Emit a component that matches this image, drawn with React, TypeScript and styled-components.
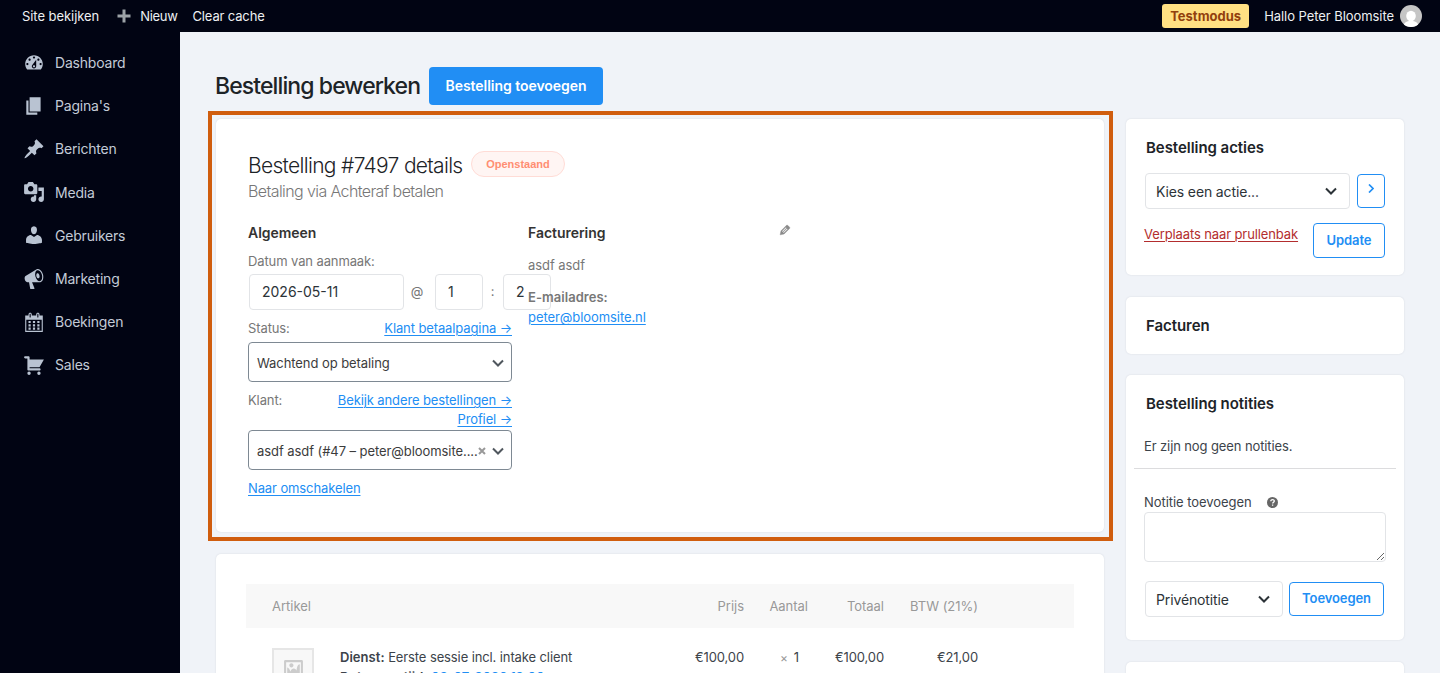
import React from "react";
import styled, { createGlobalStyle, css } from "styled-components";

const GlobalStyle = createGlobalStyle`
  * { box-sizing: border-box; }
  html, body { margin: 0; padding: 0; overflow: hidden; }
  body {
    font-family: Inter, "Liberation Sans", sans-serif;
    font-size: 13px;
    letter-spacing: -0.11px;
    color: #3c434a;
    background: #f0f3f8;
  }
  h1, h2, h3, p { margin: 0; }
`;

const Screen = styled.div`
  height: 673px;
  overflow: hidden;
  display: flex;
  flex-direction: column;
`;

const AdminBar = styled.header`
  flex: none;
  height: 32px;
  padding: 0 18px 0 22px;
  display: flex;
  align-items: center;
  background: #010413;
  color: #eef0f2;
  line-height: 32px;
  font-size: 13px;
`;

const BarItem = styled.span<{ $gap: number; $spacing?: number }>`
  display: flex;
  align-items: center;
  margin-left: ${(p) => p.$gap}px;
  letter-spacing: ${(p) => p.$spacing ?? -0.06}px;
  white-space: nowrap;
`;

const PlusIcon = styled.svg`
  width: 14px;
  height: 14px;
  margin-right: 9px;
  fill: #9ca2a7;
`;

const TestBadge = styled.span`
  margin-left: auto;
  height: 24px;
  width: 87px;
  text-align: center;
  border-radius: 3px;
  background: #ffe083;
  color: #92400e;
  font-weight: 700;
  letter-spacing: 0;
  line-height: 25px;
`;

const Avatar = styled.svg`
  width: 22px;
  height: 22px;
  margin-left: 6px;
  border-radius: 50%;
  background: #c5c5c5;
`;

const Body = styled.div`
  flex: 1;
  min-height: 0;
  display: flex;
`;

const Sidebar = styled.nav`
  flex: none;
  width: 180px;
  padding-top: 9px;
  background: #010413;
`;

const MenuItem = styled.a`
  display: flex;
  align-items: center;
  height: 43.2px;
  padding-left: 23px;
  gap: 10px;
  font-size: 14px;
  letter-spacing: -0.2px;
  color: #c3cbd7;
`;

const MenuIcon = styled.svg`
  width: 22px;
  height: 22px;
  fill: #b9c3d2;
`;

const Main = styled.main`
  flex: 1;
  min-width: 0;
  padding: 35px 36px 0 35px;
`;

const TitleRow = styled.div`
  display: flex;
  align-items: center;
  height: 38px;
  margin-bottom: 6px;
  gap: 9px;
`;

const PageTitle = styled.h1`
  width: 205px;
  font-size: 23px;
  font-weight: 500;
  letter-spacing: -0.9px;
  line-height: 38px;
  color: #1d2327;
  white-space: nowrap;
`;

const PrimaryButton = styled.button`
  width: 174px;
  height: 38px;
  padding: 0;
  border: 0;
  border-radius: 4px;
  background: #218ef4;
  color: #fff;
  font: 600 14px/38px Inter, sans-serif;
  letter-spacing: -0.04px;
`;

const Columns = styled.div`
  display: flex;
  align-items: flex-start;
  margin-left: -7px;
`;

const ContentColumn = styled.div`
  flex: none;
  width: 905px;
`;

const SideColumn = styled.aside`
  width: 278px;
  margin: 8px 0 0 13px;
  display: flex;
  flex-direction: column;
`;

const panel = css`
  background: #fff;
  border-radius: 5px;
  box-shadow: 0 0 2px rgba(30, 40, 60, 0.12);
`;

const Highlight = styled.div`
  height: 430px;
  padding: 4px 5px 5px 4px;
  border: 4px solid #d05d0e;
`;

const OrderPanel = styled.section`
  ${panel}
  height: 413px;
  padding: 32px;
`;

const OrderHeading = styled.div`
  display: flex;
  align-items: flex-start;
`;

const OrderTitle = styled.h2`
  width: 223px;
  font-size: 21px;
  font-weight: 300;
  line-height: 30px;
  letter-spacing: -0.68px;
  color: #1d2327;
  white-space: nowrap;
`;

const StatusPill = styled.span`
  width: 94px;
  height: 26px;
  border: 1px solid #ffdcd6;
  border-radius: 13px;
  background: #fff5f3;
  color: #ff8e72;
  font-family: "Liberation Sans", Arial, sans-serif;
  font-size: 11px;
  font-weight: 700;
  letter-spacing: 0;
  line-height: 24px;
  text-align: center;
`;

const OrderSubtitle = styled.p`
  font-size: 16px;
  font-weight: 300;
  line-height: 21px;
  letter-spacing: -0.6px;
  color: #777;
`;

const OrderColumns = styled.div`
  display: flex;
  gap: 16px;
  margin-top: 21px;
  color: #777;
`;

const OrderColumn = styled.div`
  width: 264px;
`;

const ColumnTitle = styled.h3`
  display: flex;
  justify-content: space-between;
  font-size: 14px;
  font-weight: 600;
  line-height: 20px;
  letter-spacing: -0.04px;
  color: #333;
`;

const EditIcon = styled.svg`
  width: 14px;
  height: 14px;
  fill: #8a8a8a;
  stroke: #8a8a8a;
  stroke-width: 0.6;
`;

const FieldLabel = styled.div<{ $top: number }>`
  display: flex;
  justify-content: space-between;
  margin-top: ${(p) => p.$top}px;
  line-height: 19px;
`;

const FieldLinks = styled.span`
  display: flex;
  flex-direction: column;
  align-items: flex-end;
`;

const Link = styled.a<{ $danger?: boolean }>`
  color: ${(p) => (p.$danger ? "#b32d2e" : "#218ef4")};
  text-decoration: underline;
  text-decoration-thickness: 1px;
  text-underline-offset: 1.5px;
  white-space: nowrap;
`;

const DateRow = styled.div`
  display: flex;
  align-items: center;
  width: max-content;
  height: 36px;
  margin: 3px 0 9px 1px;
`;

const TextBox = styled.span<{ $width: number }>`
  width: ${(p) => p.$width}px;
  height: 36px;
  padding: 0 0 0 12px;
  border: 1px solid #e2e4e7;
  border-radius: 4px;
  background: #fff;
  color: #2c3338;
  font-size: 14px;
  letter-spacing: 0;
  line-height: 34px;
`;

const Separator = styled.span`
  width: 31px;
  text-align: center;
  padding: 0 5px 2px 0;
`;

const ColonSeparator = styled(Separator)`
  width: 20px;
  padding-right: 1px;
`;

const SelectBox = styled.div<{ $top: number }>`
  display: flex;
  align-items: center;
  height: 40px;
  margin-top: ${(p) => p.$top}px;
  padding: 2px 7px 0 8px;
  border: 1px solid #7e8993;
  border-radius: 4px;
  background: #fff;
  color: #3c3c3c;
  letter-spacing: -0.07px;
  white-space: nowrap;
`;

const ClearMark = styled.svg`
  width: 8px;
  height: 8px;
  margin-right: 6px;
  stroke: #999;
  stroke-width: 2;
`;

const Chevron = styled.svg<{ $color?: string }>`
  width: 12px;
  height: 8px;
  fill: none;
  stroke: ${(p) => p.$color ?? "#50575e"};
  stroke-width: 2;
`;

const Grow = styled.span`
  flex: 1;
  min-width: 0;
`;

const SwitchLink = styled.div`
  margin-top: 9px;
  line-height: 19px;
`;

const BillingText = styled.p<{ $top: number }>`
  margin-top: ${(p) => p.$top}px;
  line-height: 20px;
  letter-spacing: -0.07px;
`;

const Strong = styled.strong<{ $block?: boolean }>`
  display: ${(p) => (p.$block ? "block" : "inline")};
  font-weight: 600;
  letter-spacing: 0.04px;
`;

const ItemsPanel = styled.section`
  ${panel}
  margin: 13px 9px 0 8px;
  height: 140px;
  padding: 30px 30px 0 30px;
`;

const ItemsHead = styled.div`
  display: flex;
  height: 44px;
  align-items: center;
  padding: 0 0 0 26px;
  background: #f8f8f8;
  color: #999;
  letter-spacing: -0.02px;
`;

const ItemRow = styled.div`
  display: flex;
  padding: 20px 0 0 26px;
  line-height: 19px;
  white-space: nowrap;
`;

const Cell = styled.span<{ $width: number }>`
  width: ${(p) => p.$width}px;
  text-align: right;
`;

const ItemName = styled.span<{ $width: number }>`
  width: ${(p) => p.$width}px;
`;

const ItemMeta = styled.span`
  display: block;
  line-height: 21px;
  letter-spacing: -0.15px;
`;

const Thumb = styled.span`
  width: 42px;
  height: 42px;
  margin-right: 26px;
  border: 2px solid #e6e6e6;
  background: #f8f8f8;
  display: flex;
  align-items: center;
  justify-content: center;
`;

const ThumbIcon = styled.svg`
  width: 21px;
  height: 21px;
  fill: #ccc;
`;

const Times = styled.small`
  margin-right: 6px;
  font-size: 12px;
  color: #999;
`;

const DateValue = styled.b`
  font-weight: 600;
  color: #218ef4;
`;

const SidePanel = styled.section<{ $height: number; $gap?: number }>`
  ${panel}
  height: ${(p) => p.$height}px;
  margin-bottom: ${(p) => p.$gap ?? 22}px;
  padding: 16px 18px 0;
`;

const SideTitle = styled.h2`
  padding: 0 2px;
  font-size: 15px;
  font-weight: 600;
  line-height: 25px;
  letter-spacing: -0.05px;
  color: #1d2327;
`;

const ActionRow = styled.div<{ $top: number }>`
  display: flex;
  align-items: center;
  margin: ${(p) => p.$top}px 0 0 1px;
`;

const SideSelect = styled.div<{ $width: number }>`
  display: flex;
  align-items: center;
  width: ${(p) => p.$width}px;
  height: 36px;
  padding: 0 12px 0 10px;
  border: 1px solid #e2e4e7;
  border-radius: 4px;
  color: #2c3338;
  font-size: 14px;
  letter-spacing: -0.13px;
`;

const OutlineButton = styled.button<{ $width: number; $height: number; $gap: number }>`
  width: ${(p) => p.$width}px;
  height: ${(p) => p.$height}px;
  margin-left: ${(p) => p.$gap}px;
  padding: 0 0 2px;
  border: 1px solid #218ef4;
  border-radius: 4px;
  background: #fff;
  color: #218ef4;
  font: 600 13px/30px Inter, sans-serif;
  letter-spacing: -0.1px;
`;

const ArrowIcon = styled.svg`
  display: inline-block;
  width: 6px;
  height: 9px;
  margin-bottom: 2px;
  fill: none;
  stroke: #218ef4;
  stroke-width: 1.7;
`;

const TrashRow = styled.div`
  display: flex;
  justify-content: space-between;
  margin-top: 14px;
  padding-right: 1px;
  line-height: 23px;
`;

const EmptyNotes = styled.p`
  margin: 21px -10px 0;
  padding: 0 10px 12px;
  border-bottom: 1px solid #dcdcde;
  line-height: 19px;
`;

const NoteLabel = styled.div`
  display: flex;
  align-items: center;
  margin-top: 24px;
  line-height: 19px;
  letter-spacing: -0.05px;
`;

const HelpIcon = styled.svg`
  width: 11px;
  height: 11px;
  margin-left: 15px;
`;

const NoteArea = styled.textarea`
  display: block;
  width: 242px;
  height: 50px;
  border: 1px solid #e2e4e7;
  border-radius: 4px;
  background: #fff;
`;

const menu: { label: string; path: string }[] = [
  { label: "Dashboard", path: "M3.76 16h12.48c1.1-1.37 1.76-3.11 1.76-5 0-4.42-3.58-8-8-8s-8 3.58-8 8c0 1.89.66 3.63 1.76 5zM10 4c.55 0 1 .45 1 1s-.45 1-1 1-1-.45-1-1 .45-1 1-1zM6 6c.55 0 1 .45 1 1s-.45 1-1 1-1-.45-1-1 .45-1 1-1zm8 0c.55 0 1 .45 1 1s-.45 1-1 1-1-.45-1-1 .45-1 1-1zm-5.37 5.55L12 7v6c0 1.1-.9 2-2 2s-2-.9-2-2c0-.57.24-1.08.63-1.45zM4 10c.55 0 1 .45 1 1s-.45 1-1 1-1-.45-1-1 .45-1 1-1zm12 0c.55 0 1 .45 1 1s-.45 1-1 1-1-.45-1-1 .45-1 1-1zm-5 3c0-.55-.45-1-1-1s-1 .45-1 1 .45 1 1 1 1-.45 1-1z" },
  { label: "Pagina's", path: "M6 15V2h10v13H6zm-1 1h8v2H3V5h2v11z" },
  { label: "Berichten", path: "M10.44 3.02l1.82-1.82 6.36 6.35-1.83 1.82c-1.05-.68-2.48-.57-3.41.36l-.75.75c-.92.93-1.04 2.35-.35 3.41l-1.83 1.82-2.41-2.41-2.8 2.79c-.42.42-3.38 2.71-3.8 2.29s1.86-3.39 2.28-3.81l2.79-2.79L4.1 9.36l1.83-1.82c1.05.69 2.48.57 3.4-.36l.75-.75c.93-.92 1.05-2.35.36-3.41z" },
  { label: "Media", path: "M13 11V4c0-.55-.45-1-1-1h-1.67L9 1H5L3.67 3H2c-.55 0-1 .45-1 1v7c0 .55.45 1 1 1h10c.55 0 1-.45 1-1zM7 4.5c1.38 0 2.5 1.12 2.5 2.5S8.38 9.5 7 9.5 4.5 8.38 4.5 7 5.62 4.5 7 4.5zM14 6h5v10.5c0 1.38-1.12 2.5-2.5 2.5S14 17.88 14 16.5s1.12-2.5 2.5-2.5c.17 0 .34.02.5.05V9h-3V6zm-4 8.05V13h2v3.5c0 1.38-1.12 2.5-2.5 2.5S7 17.88 7 16.5 8.12 14 9.5 14c.17 0 .34.02.5.05z" },
  { label: "Gebruikers", path: "M10 9.25c-2.27 0-2.73-3.44-2.73-3.44C7 4.02 7.82 2 9.97 2c2.16 0 2.98 2.02 2.71 3.81 0 0-.41 3.44-2.68 3.44zm0 2.57L12.72 10c2.39 0 4.52 2.33 4.52 4.53v2.49s-3.65 1.13-7.24 1.13c-3.65 0-7.24-1.13-7.24-1.13v-2.49c0-2.25 1.94-4.48 4.47-4.48z" },
  { label: "Marketing", path: "M18.15 5.94c.46 1.62.38 3.22-.02 4.48-.42 1.28-1.26 2.18-2.3 2.48-.16.06-.26.06-.4.06-.06.02-.12.02-.18.02-.06.02-.14.02-.22.02h-6.8l2.22 5.5c.02.14-.06.26-.14.34-.08.1-.24.16-.34.16H6.95c-.1 0-.26-.06-.34-.16-.08-.08-.16-.2-.14-.34l-1-5.5H4.25l-.02-.02c-.5.06-1.08-.18-1.54-.62s-.88-1.08-1.06-1.88c-.24-.8-.2-1.56-.02-2.2.18-.62.58-1.08 1.06-1.3l.02-.02 9-5.4c.1-.06.18-.1.24-.16.06-.04.14-.08.24-.12.16-.08.28-.12.5-.18 1.04-.3 2.24.1 3.22.98s1.84 2.24 2.26 3.86zm-2.58 5.98h-.02c.4-.1.74-.34 1.04-.7.58-.7.86-1.76.86-3.04 0-.64-.1-1.3-.28-1.98-.34-1.36-1.02-2.5-1.78-3.24s-1.68-1.1-2.46-.88c-.82.22-1.4.96-1.7 2-.32 1.04-.28 2.36.06 3.72.38 1.36 1 2.5 1.8 3.24.78.74 1.62 1.1 2.48.88zm-2.54-7.08c.22-.04.42-.02.62.04.38.16.76.48 1.02 1s.42 1.2.42 1.78c0 .3-.04.56-.12.8-.18.48-.44.84-.86.94-.34.1-.8-.06-1.14-.4s-.64-.86-.78-1.5c-.18-.62-.12-1.24.02-1.72s.48-.84.82-.94z" },
  { label: "Boekingen", path: "M15 4h3v15H2V4h3V3c0-.41.15-.76.44-1.06.29-.29.65-.44 1.06-.44s.77.15 1.06.44c.29.3.44.65.44 1.06v1h4V3c0-.41.15-.76.44-1.06.29-.29.65-.44 1.06-.44s.77.15 1.06.44c.29.3.44.65.44 1.06v1zM6 3v2.5c0 .14.05.26.15.36.09.09.21.14.35.14s.26-.05.35-.14c.1-.1.15-.22.15-.36V3c0-.14-.05-.26-.15-.35-.09-.1-.21-.15-.35-.15s-.26.05-.35.15c-.1.09-.15.21-.15.35zm7 0v2.5c0 .14.05.26.14.36.1.09.22.14.36.14s.26-.05.36-.14c.09-.1.14-.22.14-.36V3c0-.14-.05-.26-.14-.35-.1-.1-.22-.15-.36-.15s-.26.05-.36.15c-.09.09-.14.21-.14.35zm4 15V8H3v10h14zM7 9v2H5V9h2zm2 0h2v2H9V9zm4 2V9h2v2h-2zm-6 1v2H5v-2h2zm2 0h2v2H9v-2zm4 2v-2h2v2h-2zm-6 1v2H5v-2h2zm4 2H9v-2h2v2zm4 0h-2v-2h2v2z" },
  { label: "Sales", path: "M6 13h9c.55 0 1 .45 1 1s-.45 1-1 1H5c-.55 0-1-.45-1-1V4H2c-.55 0-1-.45-1-1s.45-1 1-1h3c.55 0 1 .45 1 1v2h13l-4 7H6v1zm-.5 3c.83 0 1.5.67 1.5 1.5S6.33 19 5.5 19 4 18.33 4 17.5 4.67 16 5.5 16zm9 0c.83 0 1.5.67 1.5 1.5s-.67 1.5-1.5 1.5-1.5-.67-1.5-1.5.67-1.5 1.5-1.5z" },
];

const Down = ({ color }: { color?: string }) => (
  <Chevron $color={color} viewBox="0 0 12 8">
    <path d="M1 1.5 6 6.5 11 1.5" />
  </Chevron>
);

export default function App() {
  return (
    <Screen>
      <GlobalStyle />
      <AdminBar>
        <BarItem $gap={0}>Site bekijken</BarItem>
        <BarItem $gap={18} $spacing={-0.3}>
          <PlusIcon viewBox="0 0 14 14"><path d="M5.5 0.5h3v5h5v3h-5v5h-3v-5h-5v-3h5z" /></PlusIcon>
          Nieuw
        </BarItem>
        <BarItem $gap={15} $spacing={-0.15}>Clear cache</BarItem>
        <TestBadge>Testmodus</TestBadge>
        <BarItem $gap={15}>Hallo Peter Bloomsite</BarItem>
        <Avatar viewBox="0 0 22 22">
          <ellipse cx="11" cy="11" rx="4.8" ry="5.2" fill="#fff" />
          <path d="M3.5 22c0-4.5 3-5.5 5.5-6h4c2.5.5 5.5 1.5 5.5 6z" fill="#fff" />
        </Avatar>
      </AdminBar>
      <Body>
        <Sidebar>
          {menu.map((m) => (
            <MenuItem key={m.label}>
              <MenuIcon viewBox="0 0 20 20"><path d={m.path} fillRule="evenodd" /></MenuIcon>
              {m.label}
            </MenuItem>
          ))}
        </Sidebar>
        <Main>
          <TitleRow>
            <PageTitle>Bestelling bewerken</PageTitle>
            <PrimaryButton>Bestelling toevoegen</PrimaryButton>
          </TitleRow>
          <Columns>
            <ContentColumn>
              <Highlight>
                <OrderPanel>
                  <OrderHeading>
                    <OrderTitle>Bestelling #7497 details</OrderTitle>
                    <StatusPill>Openstaand</StatusPill>
                  </OrderHeading>
                  <OrderSubtitle>Betaling via Achteraf betalen</OrderSubtitle>
                  <OrderColumns>
                    <OrderColumn>
                      <ColumnTitle>Algemeen</ColumnTitle>
                      <FieldLabel $top={9}>Datum van aanmaak:</FieldLabel>
                      <DateRow>
                        <TextBox $width={155}>2026-05-11</TextBox>
                        <Separator>@</Separator>
                        <TextBox $width={48}>1</TextBox>
                        <ColonSeparator>:</ColonSeparator>
                        <TextBox $width={48}>2</TextBox>
                      </DateRow>
                      <FieldLabel $top={0}>
                        Status:
                        <FieldLinks><Link>Klant betaalpagina →</Link></FieldLinks>
                      </FieldLabel>
                      <SelectBox $top={4}>
                        <Grow>Wachtend op betaling</Grow>
                        <Down />
                      </SelectBox>
                      <FieldLabel $top={9}>
                        Klant:
                        <FieldLinks>
                          <Link>Bekijk andere bestellingen →</Link>
                          <Link>Profiel →</Link>
                        </FieldLinks>
                      </FieldLabel>
                      <SelectBox $top={1}>
                        <Grow>asdf asdf (#47 – peter@bloomsite....</Grow>
                        <ClearMark viewBox="0 0 8 8"><path d="M1 1 7 7M7 1 1 7" /></ClearMark>
                        <Down />
                      </SelectBox>
                      <SwitchLink><Link>Naar omschakelen</Link></SwitchLink>
                    </OrderColumn>
                    <OrderColumn>
                      <ColumnTitle>
                        Facturering
                        <EditIcon viewBox="0 0 20 20"><path d="M13.89 3.39l2.71 2.72c.46.46.42 1.24.03 1.64l-8.01 8.02-5.56 1.16 1.16-5.58s7.6-7.63 7.99-8.03c.39-.39 1.22-.39 1.68.07zm-2.73 2.79l-5.59 5.61 1.11 1.11 5.54-5.65zm-2.97 8.23l5.58-5.6-1.07-1.08-5.59 5.6z" /></EditIcon>
                      </ColumnTitle>
                      <BillingText $top={12}>asdf asdf</BillingText>
                      <BillingText $top={12}>
                        <Strong $block>E-mailadres:</Strong>
                        <Link>peter@bloomsite.nl</Link>
                      </BillingText>
                    </OrderColumn>
                  </OrderColumns>
                </OrderPanel>
              </Highlight>
              <ItemsPanel>
                <ItemsHead>
                  <ItemName $width={382}>Artikel</ItemName>
                  <Cell $width={90}>Prijs</Cell>
                  <Cell $width={64}>Aantal</Cell>
                  <Cell $width={76}>Totaal</Cell>
                  <Cell $width={94}>BTW (21%)</Cell>
                </ItemsHead>
                <ItemRow>
                  <Thumb>
                    <ThumbIcon viewBox="0 0 20 20"><path d="M2.25 1h15.5c.69 0 1.25.56 1.25 1.25v15.5c0 .69-.56 1.25-1.25 1.25H2.25C1.56 19 1 18.44 1 17.75V2.25C1 1.56 1.56 1 2.25 1zM17 17V3H3v14h14zM10 6c0-1.1-.9-2-2-2s-2 .9-2 2 .9 2 2 2 2-.9 2-2zm3 5s0-6 3-6v10c0 .55-.45 1-1 1H5c-.55 0-1-.45-1-1V8c2 0 3 4 3 4s1-3 3-3 3 2 3 2z" /></ThumbIcon>
                  </Thumb>
                  <ItemName $width={314}>
                    <Strong>Dienst:</Strong> Eerste sessie incl. intake client
                    <ItemMeta>
                      <Strong>Datum en tijd:</Strong> <DateValue>08-07-2026 12:00</DateValue>
                    </ItemMeta>
                  </ItemName>
                  <Cell $width={90}>€100,00</Cell>
                  <Cell $width={55}><Times>×</Times>1</Cell>
                  <Cell $width={85}>€100,00</Cell>
                  <Cell $width={94}>€21,00</Cell>
                </ItemRow>
              </ItemsPanel>
            </ContentColumn>
            <SideColumn>
              <SidePanel $height={156}>
                <SideTitle>Bestelling acties</SideTitle>
                <ActionRow $top={13}>
                  <SideSelect $width={205}><Grow>Kies een actie...</Grow><Down color="#2c3338" /></SideSelect>
                  <OutlineButton $width={28} $height={34} $gap={7}>
                    <ArrowIcon viewBox="0 0 6 9"><path d="M1 0.5 5 4.5 1 8.5" /></ArrowIcon>
                  </OutlineButton>
                </ActionRow>
                <TrashRow>
                  <Link $danger>Verplaats naar prullenbak</Link>
                  <OutlineButton $width={72} $height={35} $gap={0}>Update</OutlineButton>
                </TrashRow>
              </SidePanel>
              <SidePanel $height={57} $gap={21}>
                <SideTitle>Facturen</SideTitle>
              </SidePanel>
              <SidePanel $height={265}>
                <SideTitle>Bestelling notities</SideTitle>
                <EmptyNotes>Er zijn nog geen notities.</EmptyNotes>
                <NoteLabel>
                  Notitie toevoegen
                  <HelpIcon viewBox="0 0 11 11">
                    <circle cx="5.5" cy="5.5" r="5.5" fill="#666" />
                    <path d="M3.8 4.2c0-2.2 3.5-2.1 3.5-.1 0 1.2-1.6 1.2-1.6 2.5M5.6 7.5v1.3" fill="none" stroke="#fff" strokeWidth="1.3" />
                  </HelpIcon>
                </NoteLabel>
                <NoteArea />
                <ActionRow $top={19}>
                  <SideSelect $width={138}><Grow>Privénotitie</Grow><Down color="#2c3338" /></SideSelect>
                  <OutlineButton $width={95} $height={34} $gap={6}>Toevoegen</OutlineButton>
                </ActionRow>
              </SidePanel>
              <SidePanel $height={60} />
            </SideColumn>
          </Columns>
        </Main>
      </Body>
    </Screen>
  );
}
